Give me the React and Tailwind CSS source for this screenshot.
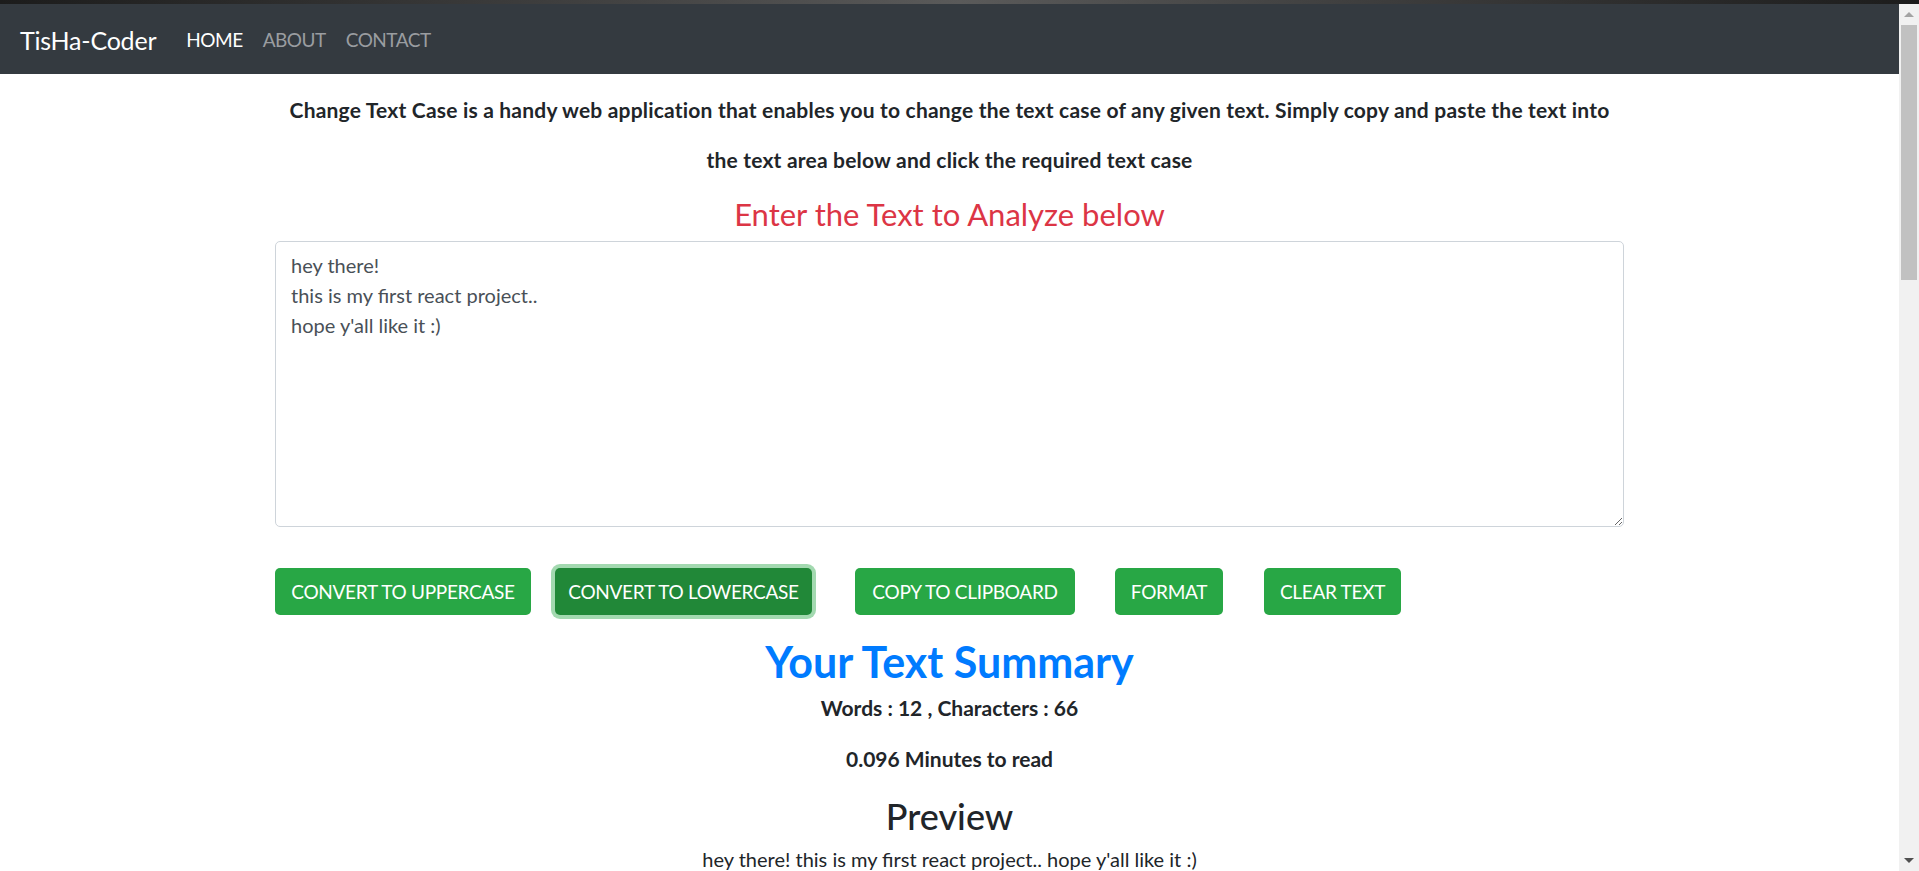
import React, { useState } from "react";

const intro =
    "Change Text Case is a handy web application that enables you to change the text case of any given text. Simply copy and paste the text into";
const intro2 = "the text area below and click the required text case";
const sample = "hey there!\nthis is my first react project..\nhope y'all like it :)";

const buttons = [
    { label: "CONVERT TO UPPERCASE", cls: "w-[256px]" },
    { label: "CONVERT TO LOWERCASE", cls: "w-[257px] ml-[24px] bg-[#218838] shadow-[0_0_0_4px_rgba(72,180,97,0.5)]" },
    { label: "COPY TO CLIPBOARD", cls: "w-[220px] ml-[43px]" },
    { label: "FORMAT", cls: "w-[108px] ml-[40px]" },
    { label: "CLEAR TEXT", cls: "w-[137px] ml-[41px]" },
];

function Navbar() {
    return (
        <nav className="h-[70px] bg-[#343a40] flex items-center pl-[20px] pt-[3px]">
            <span className="text-[25px] text-white mr-[20px] tracking-[-0.2px]">TisHa-Coder</span>
            <a className="px-[10px] text-[19px] tracking-[-0.5px] text-white">HOME</a>
            <a className="px-[10px] text-[19px] tracking-[-0.5px] text-[#9a9da0]">ABOUT</a>
            <a className="px-[10px] text-[19px] tracking-[-0.5px] text-[#9a9da0]">CONTACT</a>
        </nav>
    );
}

function Scrollbar() {
    return (
        <div className="w-[20px] bg-[#f1f1f1] flex flex-col items-center">
            <div className="h-[21px] flex items-center justify-center">
                <div className="w-0 h-0 border-l-[5px] border-r-[5px] border-b-[5px] border-l-transparent border-r-transparent border-b-[#a3a3a3]" />
            </div>
            <div className="w-[16px] h-[255px] bg-[#c1c1c1]" />
            <div className="flex-1" />
            <div className="h-[21px] flex items-center justify-center">
                <div className="w-0 h-0 border-l-[5px] border-r-[5px] border-t-[5px] border-l-transparent border-r-transparent border-t-[#505050]" />
            </div>
        </div>
    );
}

export default function App() {
    const [text, setText] = useState(sample);
    const preview = text.replace(/\n/g, " ");

    return (
        <div className="h-[871px] w-full flex flex-col overflow-hidden bg-white font-['Lato',sans-serif] text-[#212529]">
            <div className="h-[4px] bg-gradient-to-r from-[#1c1c1c] via-[#5a5a5a] to-[#1c1c1c]" />
            <div className="flex-1 flex min-h-0">
                <div className="flex-1 min-w-0 overflow-hidden">
                    <Navbar />
                    <div className="w-[1349px] mx-auto flex flex-col items-center">
                        <p className="mt-[11px] text-[21px] tracking-[0.2px] font-bold leading-[50px] text-center text-[#212529]">
                            {intro}
                            <br />
                            {intro2}
                        </p>
                        <h4 className="mt-[11px] text-[31px] leading-[36px] text-[#dc3545]">
                            Enter the Text to Analyze below
                        </h4>
                        <textarea
                            className="mt-[9px] w-full h-[286px] border border-[#ced4da] rounded-[5px] px-[15px] py-[7.5px] text-[20px] leading-[30px] text-[#495057] outline-none"
                            value={text}
                            onChange={(e) => setText(e.target.value)}
                        />
                        <div className="mt-[41px] w-full flex">
                            {buttons.map((b) => (
                                <button
                                    key={b.label}
                                    className={
                                        "h-[47px] rounded-[5px] bg-[#28a745] text-white text-[19px] tracking-[-0.3px] leading-[30px] text-center whitespace-nowrap " +
                                        b.cls
                                    }
                                >
                                    {b.label}
                                </button>
                            ))}
                        </div>
                        <h1 className="mt-[20px] text-[43px] leading-[54px] font-bold text-[#007bff]">
                            Your Text Summary
                        </h1>
                        <p className="mt-[4px] text-[21px] leading-[30px] font-bold">
                            Words : 12 , Characters : 66
                        </p>
                        <p className="mt-[21px] text-[21px] leading-[30px] font-bold">0.096 Minutes to read</p>
                        <h2 className="mt-[18px] text-[36px] leading-[48px] font-medium">Preview</h2>
                        <p className="mt-[4px] text-[20px] leading-[30px]">{preview}</p>
                    </div>
                </div>
                <Scrollbar />
            </div>
        </div>
    );
}
